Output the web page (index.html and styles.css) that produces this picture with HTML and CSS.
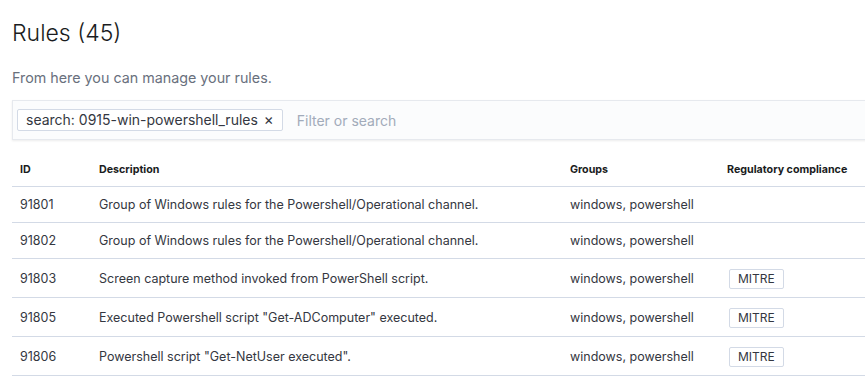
FILE: index.html
```html
<!DOCTYPE html>
<html lang="en">

<head>
    <meta charset="UTF-8">
    <meta name="viewport" content="width=device-width, initial-scale=1.0">
    <title>Rules</title>
    <link rel="stylesheet" href="styles.css">
</head>

<body>

    <div class="pagina">
        <h1 class="titulo">Rules (45)</h1>
        <p class="subtitulo">From here you can manage your rules.</p>

        <div class="busca">
            <span class="filtro">search: 0915-win-powershell_rules <span class="fechar">&#215;</span></span>
            <input type="text" class="campo" placeholder="Filter or search">
        </div>

        <table class="tabela">
            <thead>
                <tr>
                    <th class="col-id">ID</th>
                    <th class="col-desc">Description</th>
                    <th class="col-grupo">Groups</th>
                    <th class="col-comp">Regulatory compliance</th>
                </tr>
            </thead>
            <tbody>
                <tr>
                    <td>91801</td>
                    <td>Group of Windows rules for the Powershell/Operational channel.</td>
                    <td>windows, powershell</td>
                    <td></td>
                </tr>
                <tr>
                    <td>91802</td>
                    <td>Group of Windows rules for the Powershell/Operational channel.</td>
                    <td>windows, powershell</td>
                    <td></td>
                </tr>
                <tr>
                    <td>91803</td>
                    <td>Screen capture method invoked from PowerShell script.</td>
                    <td>windows, powershell</td>
                    <td><span class="selo">MITRE</span></td>
                </tr>
                <tr>
                    <td>91805</td>
                    <td>Executed Powershell script "Get-ADComputer" executed.</td>
                    <td>windows, powershell</td>
                    <td><span class="selo">MITRE</span></td>
                </tr>
                <tr>
                    <td>91806</td>
                    <td>Powershell script "Get-NetUser executed".</td>
                    <td>windows, powershell</td>
                    <td><span class="selo">MITRE</span></td>
                </tr>
            </tbody>
        </table>
    </div>

</body>

</html>
```

FILE: styles.css
```css
html {
    background-color: #fff;
    font-family: Inter, 'Liberation Sans', sans-serif;
    color: #343741;
}

body {
    margin: 0;
    overflow: hidden;
}

.pagina {
    width: 900px;
    padding: 0 0 0 12px;
}

.titulo {
    font-size: 23px;
    font-weight: 300;
    line-height: 32px;
    color: #1a1c21;
    margin: 0;
    padding-top: 17px;
}

.subtitulo {
    font-size: 14.3px;
    line-height: 20px;
    color: #69707d;
    margin: 19px 0 0 0;
}

.busca {
    display: flex;
    align-items: center;
    height: 38px;
    margin-top: 12px;
    background-color: #fbfcfd;
    border: 1px solid #e6e9ee;
    box-shadow: 0 1px 2px rgba(0, 0, 0, 0.08);
    padding-left: 4px;
}

.filtro {
    font-size: 14px;
    line-height: 20px;
    color: #343741;
    background-color: #fff;
    border: 1px solid #d3dae6;
    border-radius: 2px;
    padding: 0 8px;
}

.fechar {
    font-size: 15px;
    margin-left: 2px;
    color: #343741;
}

.campo {
    border: none;
    background: transparent;
    font-family: inherit;
    font-size: 14px;
    margin-left: 12px;
    width: 300px;
    outline: none;
}

.campo::placeholder {
    color: #a2abba;
}

.tabela {
    width: 100%;
    border-collapse: collapse;
    margin-top: 14px;
}

.tabela th {
    text-align: left;
    font-size: 10.7px;
    font-weight: 700;
    line-height: 16px;
    color: #1a1c21;
    padding: 8px;
    border-bottom: 1px solid #d3dae6;
}

.tabela td {
    font-size: 12.5px;
    line-height: 20px;
    padding: 8px 8px 7px;
    border-bottom: 1px solid #d3dae6;
    vertical-align: middle;
}

.col-id {
    width: 63px;
}

.col-desc {
    width: 455px;
}

.col-grupo {
    width: 141px;
}

.selo {
    display: inline-block;
    font-size: 12px;
    line-height: 18px;
    padding: 0 8px;
    border: 1px solid #d3dae6;
    border-radius: 2px;
    margin: 2px 0 1px 2px;
    vertical-align: middle;
}
```
